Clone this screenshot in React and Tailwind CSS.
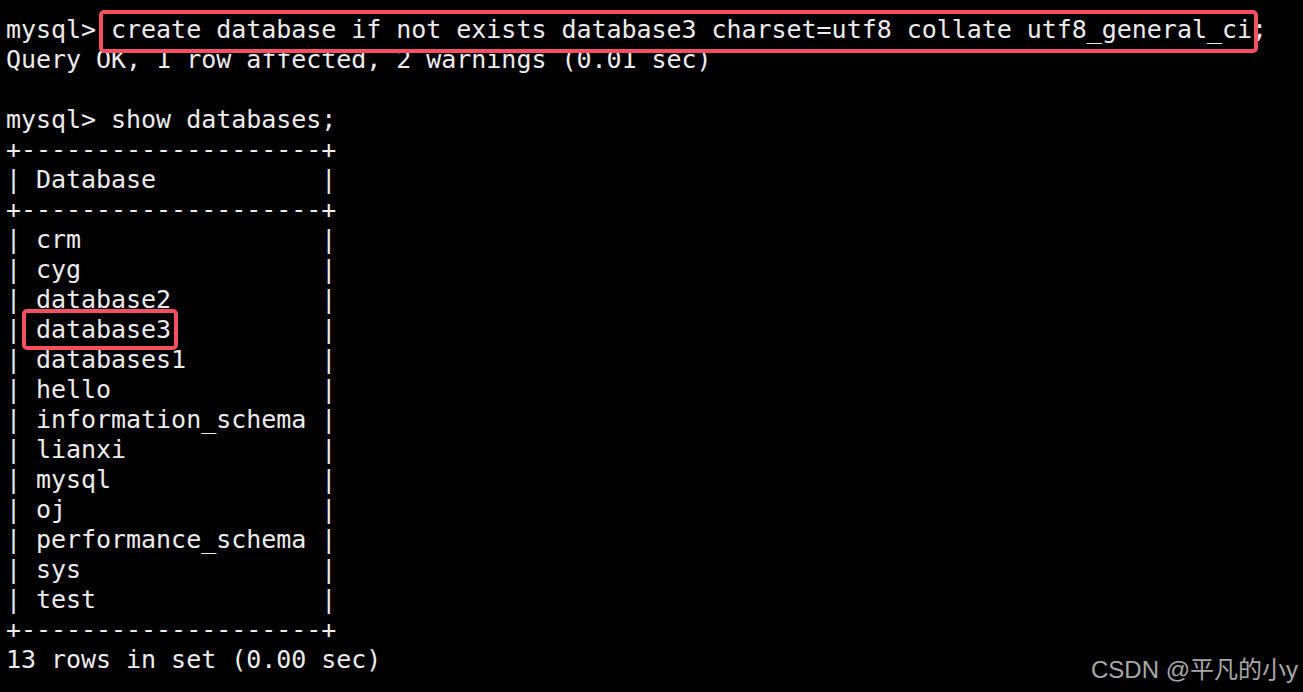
const lines = [
  "mysql> create database if not exists database3 charset=utf8 collate utf8_general_ci;",
  "Query OK, 1 row affected, 2 warnings (0.01 sec)",
  "",
  "mysql> show databases;",
  "+--------------------+",
  "| Database           |",
  "+--------------------+",
  "| crm                |",
  "| cyg                |",
  "| database2          |",
  "| database3          |",
  "| databases1         |",
  "| hello              |",
  "| information_schema |",
  "| lianxi             |",
  "| mysql              |",
  "| oj                 |",
  "| performance_schema |",
  "| sys                |",
  "| test               |",
  "+--------------------+",
  "13 rows in set (0.00 sec)",
];

export default function App() {
  return (
    <div className="relative w-[1303px] h-[692px] overflow-hidden bg-black">
      <pre
        className="pt-[15px] pl-[6px] text-[25px] tracking-[-0.04px] leading-[30px] text-[#ececec] whitespace-pre"
        style={{ fontFamily: '"DejaVu Sans Mono", monospace' }}
      >
        {lines.map((l, i) => (
          <div key={i} className="h-[30px]">
            {l}
          </div>
        ))}
      </pre>

      {/* highlight boxes */}
      <div className="absolute left-[99px] top-[10px] w-[1159px] h-[43px] border-[4px] border-[#f4505f] rounded-[5px]" />
      <div className="absolute left-[22px] top-[309px] w-[156px] h-[41px] border-[4px] border-[#f4505f] rounded-[5px]" />

      {/* watermark */}
      <div
        className="absolute right-[5px] bottom-[10px] text-[24px] leading-none text-[#a8a8a8]"
        style={{ fontFamily: '"Liberation Sans", "Noto Sans CJK SC", sans-serif' }}
      >
        CSDN @平凡的小y
      </div>
    </div>
  );
}
